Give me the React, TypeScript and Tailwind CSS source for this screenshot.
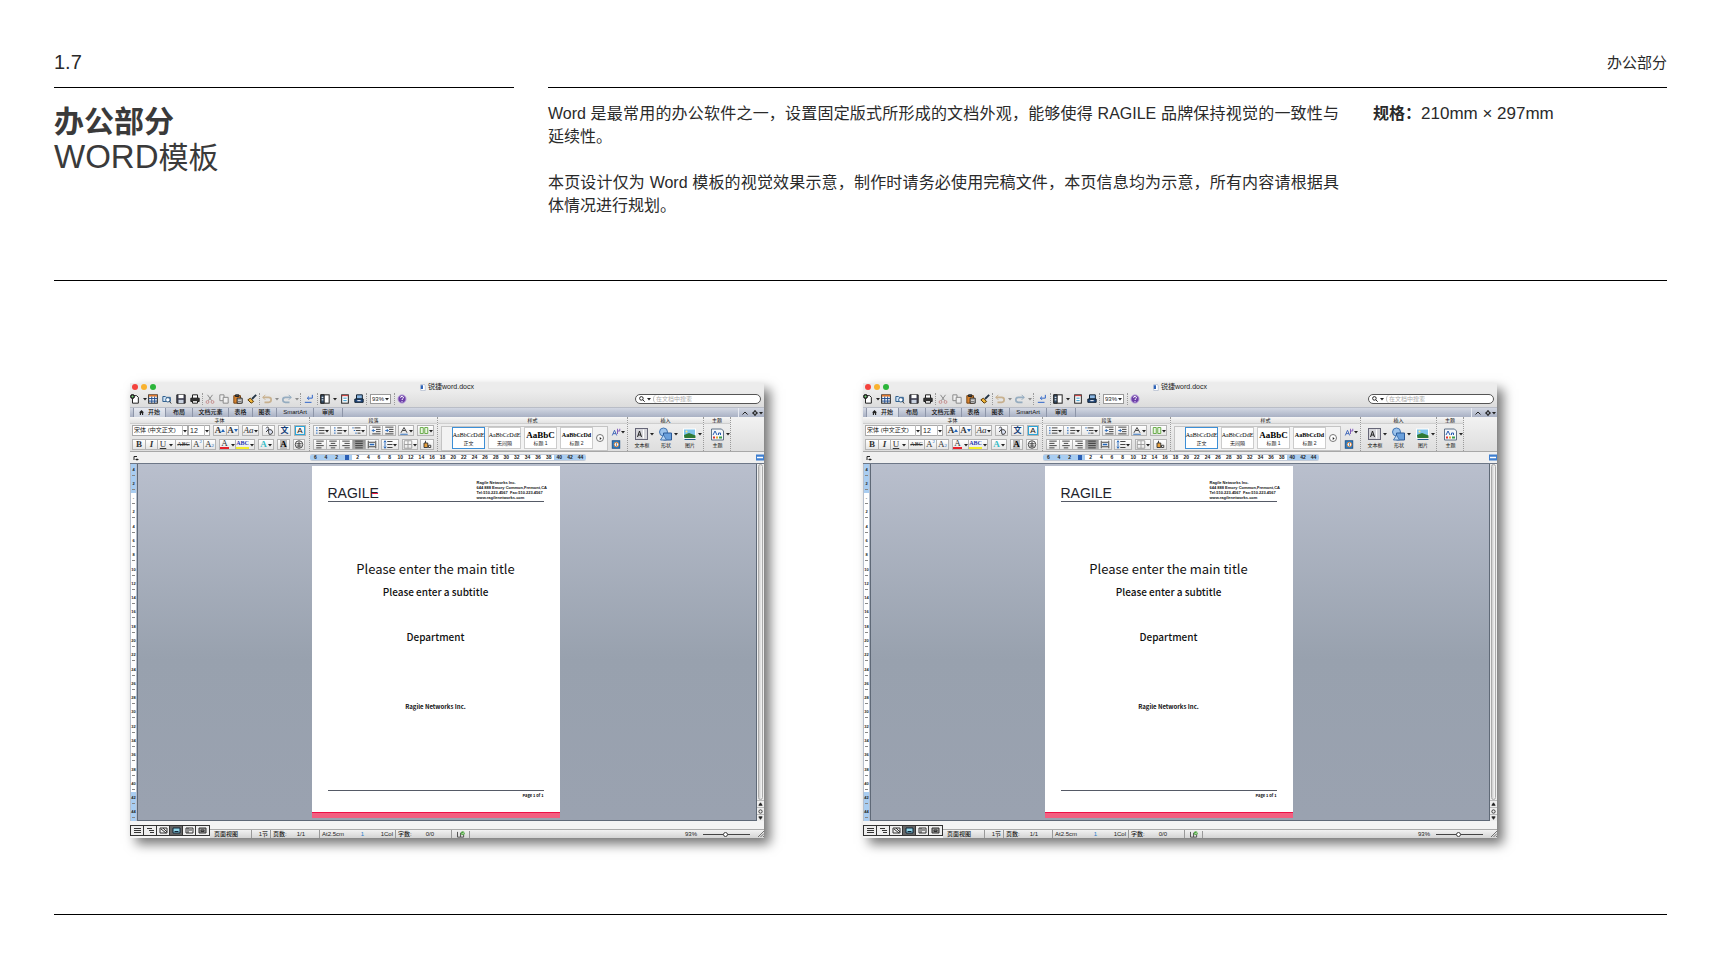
import React from "react";

type Kids = { children?: React.ReactNode };

const btn = "flex h-full items-center justify-center border border-[#b4b4b4] bg-gradient-to-b text-[#333]";

function Caret() {
  return (
    <svg viewBox="0 0 4 4" className="h-[4px] w-[4px] shrink-0">
      <path d="M0 1h4L2 3.4z" fill="#222" />
    </svg>
  );
}

function Tool({
  label,
  w,
  caret,
  active,
  children,
}: Kids & { label: string; w: string; caret?: boolean; active?: boolean }) {
  return (
    <button
      type="button"
      aria-label={label}
      className={`${btn} ${w} -mr-px shrink-0 ${active ? "from-[#939393] to-[#aaaaaa]" : "from-white to-[#e6e6e6]"}`}
    >
      {children}
      {caret && <Caret />}
    </button>
  );
}

function Cluster({ children, m }: Kids & { m?: string }) {
  return <div className={`flex h-[11px] shrink-0 pr-px ${m ?? ""}`}>{children}</div>;
}

function Glyph({ children, size = "h-[9px] w-[10px]" }: Kids & { size?: string }) {
  return (
    <svg viewBox="0 0 12 12" className={`${size} shrink-0`} fill="none" stroke="#333" strokeWidth="1.2">
      {children}
    </svg>
  );
}

function BarIcon({ label, w = "w-[14px]", caret, faded, children }: Kids & { label: string; w?: string; caret?: boolean; faded?: boolean }) {
  return (
    <button type="button" aria-label={label} className={`flex h-[14px] shrink-0 items-center justify-center ${w} ${faded ? "opacity-45" : ""}`}>
      <svg viewBox="0 0 12 12" className="h-[10px] w-[10px] shrink-0" fill="none" stroke="#222" strokeWidth="1.2">
        {children}
      </svg>
      {caret && <span className="ml-[3px] flex"><Caret /></span>}
    </button>
  );
}

function Dots() {
  return <span className="h-[12px] w-px shrink-0 border-l border-dotted border-[#9a9a9a]" />;
}

function TitleBar() {
  return (
    <div className="flex h-[8px] items-center bg-[#ececec] px-[2px]">
      <div className="flex w-[60px] gap-[3px]">
        <button type="button" aria-label="关闭" className="h-[6px] w-[6px] rounded-full bg-[#f4433d]" />
        <button type="button" aria-label="最小化" className="h-[6px] w-[6px] rounded-full bg-[#f9b22f]" />
        <button type="button" aria-label="缩放" className="h-[6px] w-[6px] rounded-full bg-[#2bb53a]" />
      </div>
      <div className="flex flex-1 items-center justify-center gap-[2px] pr-[60px]">
        <svg viewBox="0 0 8 8" className="h-[7px] w-[6px]">
          <path d="M1 0h5l1 2v6H1z" fill="#fff" stroke="#8899b5" strokeWidth=".6" />
          <path d="M1 1h3v5H1z" fill="#2e63b8" />
        </svg>
        <span className="text-[7px] leading-[8px] text-[#222]">锐捷word.docx</span>
      </div>
    </div>
  );
}

function Toolbar({ id }: { id: string }) {
  return (
    <div className="flex h-[16px] items-center bg-gradient-to-b from-[#ececec] to-[#dcdcdc] pr-[3px]">
      <BarIcon label="新建" w="w-[16px]" caret>
        <path d="M3 2h5l2 2v7H3z" fill="#fff" />
        <circle cx="3" cy="3" r="2.4" fill="#2a2a2a" />
        <path d="M3 1.6v2.8M1.6 3h2.8" stroke="#8f8" strokeWidth=".7" />
      </BarIcon>
      <BarIcon label="模板">
        <rect x=".8" y="1" width="10.4" height="10" fill="#fff" />
        <path d="M1 2h10" strokeWidth="2.2" stroke="#e0782d" />
        <path d="M1 5.5h10M1 8.5h10M4.5 3v8M8 3v8" stroke="#234e8c" />
      </BarIcon>
      <BarIcon label="打开">
        <path d="M1 3h3l1 1h5v5H1z" fill="#cfe4f7" stroke="#33618f" />
        <circle cx="7" cy="7" r="2.6" fill="#fff" stroke="#33618f" />
        <path d="M9 9l2 2.4" stroke="#333" />
      </BarIcon>
      <BarIcon label="保存">
        <path d="M1 1h10v10H1z" fill="#445" />
        <rect x="3" y="1" width="6" height="4" fill="#fff" stroke="none" />
        <rect x="3" y="7" width="6" height="4" fill="#c9d2df" stroke="none" />
      </BarIcon>
      <BarIcon label="打印">
        <path d="M3 5V1h6v4" fill="#fff" />
        <path d="M1 5h10v4H1z" fill="#333" />
        <path d="M3 8h6v3H3z" fill="#fff" />
      </BarIcon>
      <Dots />
      <BarIcon label="剪切" faded>
        <path d="M3 1l5 7M9 1L4 8" />
        <circle cx="3" cy="9.6" r="1.7" stroke="#a33" />
        <circle cx="9" cy="9.6" r="1.7" stroke="#a33" />
      </BarIcon>
      <BarIcon label="复制" faded>
        <path d="M1 1h5v7H1z" fill="#fff" />
        <path d="M5 4h6v7H5z" fill="#fff" />
      </BarIcon>
      <BarIcon label="粘贴">
        <path d="M1 2h8v9H1z" fill="#d8832f" stroke="#7a4615" />
        <path d="M3 1h4v2H3z" fill="#555" />
        <path d="M5 5h6v6H5z" fill="#fff" />
        <path d="M6 7h4M6 9h4" strokeWidth=".7" />
      </BarIcon>
      <BarIcon label="格式刷">
        <path d="M11 1L6 6" strokeWidth="2.2" stroke="#234" />
        <path d="M1 7l3-2 4 4-3 2z" fill="#f1b53a" stroke="#5a3c0c" />
      </BarIcon>
      <Dots />
      <BarIcon label="撤销" w="w-[20px]" caret faded>
        <path d="M1 4h7a3 3 0 010 6H3" stroke="#a8752a" strokeWidth="2" />
        <path d="M4 1L1 4l3 3" stroke="#a8752a" />
      </BarIcon>
      <BarIcon label="重做" w="w-[20px]" caret faded>
        <path d="M11 4H4a3 3 0 000 6h5" stroke="#3a6c97" strokeWidth="2" />
        <path d="M8 1l3 3-3 3" stroke="#3a6c97" />
      </BarIcon>
      <Dots />
      <BarIcon label="显示标记" w="w-[16px]">
        <path d="M10 1v4H4M6 3L4 5l2 2M1 10h8" stroke="#2f66c9" />
      </BarIcon>
      <Dots />
      <BarIcon label="侧边栏" w="w-[20px]" caret>
        <rect x="1" y="1" width="10" height="10" fill="#fff" />
        <path d="M1 1h4v10H1z" fill="#39536f" />
        <path d="M2 4h2M2 7h2" stroke="#fff" />
      </BarIcon>
      <BarIcon label="工具箱">
        <rect x="2" y="1" width="8" height="10" fill="#fff" />
        <path d="M2 2h8" stroke="#c33" />
        <path d="M4 5h4M4 8h4" stroke="#39c" />
      </BarIcon>
      <BarIcon label="媒体">
        <path d="M3 1h7v5H3z" fill="#8bb7e4" stroke="#123" />
        <path d="M1 6h10v4H1z" fill="#234a82" stroke="#123" />
        <path d="M4 8h4" stroke="#fff" />
      </BarIcon>
      <Dots />
      <div className="relative mx-[3px] flex items-center">
        <select aria-label="显示比例" id={`${id}-zoom`} className="h-[10px] w-[21px] appearance-none border border-[#999] bg-white px-[1px] text-[6px] leading-[8px] text-[#222]">
          <option>93%</option>
        </select>
        <span className="pointer-events-none absolute right-[2px] flex"><Caret /></span>
      </div>
      <Dots />
      <BarIcon label="帮助" w="w-[14px]">
        <circle cx="6" cy="6" r="5" fill="#6d3fa8" stroke="#c9b7e2" />
        <path d="M4.4 4.6a1.6 1.6 0 113 .6c-.6.6-1.4.8-1.4 2M6 8.4v1" stroke="#fff" />
      </BarIcon>
      <label className="ml-auto flex h-[10px] w-[126px] items-center gap-[2px] rounded-full border border-[#555] bg-white px-[3px]">
        <svg viewBox="0 0 8 8" className="h-[6px] w-[6px] shrink-0" fill="none" stroke="#222" strokeWidth="1.3">
          <circle cx="3.2" cy="3.2" r="2.4" />
          <path d="M5 5l2.6 2.6" />
        </svg>
        <Caret />
        <input aria-label="搜索" placeholder="在文档中搜索" className="min-w-0 flex-1 rounded-l-full border-l border-[#bbb] bg-transparent pl-[2px] text-[6px] leading-[8px] outline-none placeholder:text-[#aaa]" />
      </label>
    </div>
  );
}

const tabs: [string, string][] = [
  ["布局", "w-[27px]"],
  ["文档元素", "w-[36px]"],
  ["表格", "w-[24px]"],
  ["图表", "w-[24px]"],
  ["SmartArt", "w-[37px]"],
  ["审阅", "w-[29px]"],
];

function Tabs() {
  return (
    <div className="flex h-[10px] items-stretch border-t border-[#b9bdc7] bg-gradient-to-b from-[#d3d8e3] to-[#a9b1c4] pl-[3px] text-[6px] leading-[8px] font-medium text-[#111]">
      <button type="button" className="flex w-[33px] items-center justify-center gap-[4px] border-x border-[#8d95a8] bg-gradient-to-b from-[#e6e9f0] to-[#cdd3df] pb-px">
        <svg viewBox="0 0 6 6" className="h-[5px] w-[5px]">
          <path d="M3 0l3 3H5v3H3.6V4H2.4v2H1V3H0z" fill="#222" />
        </svg>
        开始
      </button>
      {tabs.map(([name, w]) => (
        <button key={name} type="button" className={`${w} border-r border-[#8d95a8] pb-px`}>
          {name}
        </button>
      ))}
      <button type="button" aria-label="折叠功能区" className="ml-auto flex w-[12px] items-center justify-center border-l border-[#e8ebf2]">
        <svg viewBox="0 0 6 4" className="h-[4px] w-[6px]" fill="none" stroke="#222"><path d="M.5 3.5L3 1l2.5 2.5" /></svg>
      </button>
      <button type="button" aria-label="设置" className="flex w-[14px] items-center justify-center gap-px">
        <svg viewBox="0 0 8 8" className="h-[6px] w-[6px]" fill="none" stroke="#222" strokeWidth="1.6">
          <circle cx="4" cy="4" r="2" />
          <path d="M4 0v2M4 6v2M0 4h2M6 4h2" />
        </svg>
        <Caret />
      </button>
    </div>
  );
}

function Group({ title, w, children }: Kids & { title: string; w: string }) {
  return (
    <div className={`${w} shrink-0 border-r border-dotted border-[#9a9a9a]`}>
      <div className="h-[7px] border-b border-[#cfcfcf] bg-gradient-to-b from-[#f7f7f7] to-[#e2e2e2] text-center text-[5px] leading-[7px] text-[#111]">
        {title}
      </div>
      {children}
    </div>
  );
}

const serif = "font-['Liberation_Serif','Noto_Sans_CJK_SC',serif]";

function FontGroup({ id }: { id: string }) {
  return (
    <Group title="字体" w="w-[180px]">
      <div className="flex flex-col gap-[3px] pt-px pl-[2px]">
        <div className="flex h-[11px]">
          <div className="relative flex items-center">
            <select id={`${id}-font`} aria-label="字体名称" className="h-[11px] w-[56px] appearance-none border border-[#aaa] bg-white px-px text-[6px] leading-[9px] text-[#222]">
              <option>宋体 (中文正文)</option>
            </select>
            <span className="pointer-events-none absolute right-0 flex h-[11px] w-[6px] items-center border-l border-[#bbb]"><Caret /></span>
          </div>
          <div className="relative flex items-center">
            <select id={`${id}-size`} aria-label="字号" className="h-[11px] w-[22px] appearance-none border border-[#aaa] bg-white px-px text-[7px] leading-[9px] text-[#222]">
              <option>12</option>
            </select>
            <span className="pointer-events-none absolute right-0 flex h-[11px] w-[6px] items-center border-l border-[#bbb]"><Caret /></span>
          </div>
          <Cluster m="ml-[3px]">
            <Tool label="增大字号" w="w-[14px]"><span className={`${serif} text-[9px] leading-[9px] font-bold`}>A</span><svg viewBox="0 0 4 4" className="h-[4px] w-[4px]"><path d="M0 3h4L2 0z" fill="#26b" /></svg></Tool>
            <Tool label="减小字号" w="w-[13px]"><span className={`${serif} text-[9px] leading-[9px] font-bold`}>A</span><svg viewBox="0 0 4 4" className="h-[4px] w-[4px]"><path d="M0 0h4L2 3z" fill="#26b" /></svg></Tool>
          </Cluster>
          <Cluster m="ml-[3px]">
            <Tool label="更改大小写" w="w-[17px]" caret><span className={`${serif} text-[9px] leading-[9px] italic`}>Aa</span></Tool>
          </Cluster>
          <Cluster m="ml-[3px]">
            <Tool label="清除格式" w="w-[13px]"><Glyph><path d="M2 3c2-3 5-1 3 2L2 8M5 5h4l2 3-2 3H6z" fill="#dde3f5" /></Glyph></Tool>
          </Cluster>
          <Cluster m="ml-[3px]">
            <Tool label="拼音指南" w="w-[13px]"><span className="text-[8px] leading-[8px] font-bold text-[#123c78]">文</span></Tool>
          </Cluster>
          <Cluster m="ml-[3px]">
            <Tool label="字符边框" w="w-[12px]"><span className="border border-[#2ba6d9] px-px text-[8px] leading-[7px] text-[#111]">A</span></Tool>
          </Cluster>
        </div>
        <div className={`flex h-[11px] text-[9px] leading-[9px] ${serif}`}>
          <Cluster>
            <Tool label="粗体" w="w-[14px]"><b>B</b></Tool>
            <Tool label="斜体" w="w-[13px]"><i className="font-bold">I</i></Tool>
            <Tool label="下划线" w="w-[19px]" caret><span className="mr-[3px] underline">U</span></Tool>
            <Tool label="删除线" w="w-[17px]"><s className="text-[6px]">ABC</s></Tool>
            <Tool label="上标" w="w-[13px]">A<sup className="text-[5px] text-[#26b]">2</sup></Tool>
            <Tool label="下标" w="w-[13px]">A<sub className="text-[5px] text-[#26b]">2</sub></Tool>
          </Cluster>
          <Cluster m="ml-[3px]">
            <Tool label="字体颜色" w="w-[17px]" caret><span className="mr-[2px] border-b-2 border-[#e8202a] px-px leading-[7px]">A</span></Tool>
            <Tool label="突出显示" w="w-[20px]" caret><b className="mr-px border-b-2 border-[#f3ee2a] text-[6px] leading-[7px] text-[#2436b0]">ABC</b></Tool>
          </Cluster>
          <Cluster m="ml-[3px]">
            <Tool label="文本效果" w="w-[16px]" caret><span className="mr-px font-bold text-[#35bcc6]">A</span></Tool>
          </Cluster>
          <Cluster m="ml-[3px]">
            <Tool label="字符底纹" w="w-[13px]"><b className="bg-[#bbb] text-[#000]">A</b></Tool>
          </Cluster>
          <Cluster m="ml-[3px]">
            <Tool label="带圈字符" w="w-[12px]"><Glyph><circle cx="6" cy="6" r="5" /><path d="M2.5 5h7M6 2v8M3 8h6" /></Glyph></Tool>
          </Cluster>
        </div>
      </div>
    </Group>
  );
}

function ParagraphGroup() {
  const dots = <path d="M1 2.5h1.6M1 6h1.6M1 9.5h1.6" stroke="#26b" strokeWidth="1.8" />;
  return (
    <Group title="段落" w="w-[128px]">
      <div className="flex flex-col gap-[3px] pt-px pl-[3px]">
        <div className="flex h-[11px]">
          <Cluster>
            <Tool label="项目符号" w="w-[18px]" caret><Glyph>{dots}<path d="M4.5 2.5H12M4.5 6H12M4.5 9.5H12" /></Glyph></Tool>
            <Tool label="编号" w="w-[19px]" caret><Glyph>{dots}<path d="M5 2.5h6M5 6h7M5 9.5h6" /></Glyph></Tool>
            <Tool label="多级列表" w="w-[19px]" caret><Glyph><path d="M1 2.5h2M3 6h2M5 9.5h2" stroke="#26b" /><path d="M4 2.5h8M6 6h6M8 9.5h4" /></Glyph></Tool>
          </Cluster>
          <Cluster m="ml-[2px]">
            <Tool label="减少缩进" w="w-[14px]"><Glyph><path d="M1 1.5h11M6 4.5h6M6 7.5h6M1 10.5h11" /><path d="M5 6H1M3 4L1 6l2 2" stroke="#26b" /></Glyph></Tool>
            <Tool label="增加缩进" w="w-[14px]"><Glyph><path d="M1 1.5h11M6 4.5h6M6 7.5h6M1 10.5h11" /><path d="M1 6h4M3 4l2 2-2 2" stroke="#26b" /></Glyph></Tool>
          </Cluster>
          <Cluster m="ml-[2px]">
            <Tool label="中文版式" w="w-[16px]" caret><Glyph><path d="M2 9l4-7 4 7M4 6h4" /><path d="M1 11h10" stroke="#26b" /></Glyph></Tool>
          </Cluster>
          <Cluster m="ml-[3px]">
            <Tool label="分栏" w="w-[17px]" caret><Glyph><path d="M1 2h4v8H1zM7 2h4v8H7z" stroke="#5da53c" fill="#eaf6e2" /></Glyph></Tool>
          </Cluster>
        </div>
        <div className="flex h-[11px]">
          <Cluster>
            <Tool label="左对齐" w="w-[14px]"><Glyph><path d="M1 1.5h10M1 4.5h7M1 7.5h10M1 10.5h7" /></Glyph></Tool>
            <Tool label="居中" w="w-[14px]"><Glyph><path d="M1 1.5h10M3 4.5h6M1 7.5h10M3 10.5h6" /></Glyph></Tool>
            <Tool label="右对齐" w="w-[14px]"><Glyph><path d="M1 1.5h10M4 4.5h7M1 7.5h10M4 10.5h7" /></Glyph></Tool>
            <Tool label="两端对齐" w="w-[14px]" active><Glyph><path d="M1 1.5h10M1 4.5h10M1 7.5h10M1 10.5h10" /></Glyph></Tool>
            <Tool label="分散对齐" w="w-[14px]"><Glyph><path d="M1 1v10M11 1v10M2 3h8M2 9h8" /><path d="M3 6h6" stroke="#26b" strokeWidth="2" /></Glyph></Tool>
          </Cluster>
          <Cluster m="ml-[2px]">
            <Tool label="行距" w="w-[18px]" caret><Glyph><path d="M5 2h7M5 6h7M5 10h7" /><path d="M2 1v10M.5 3L2 1l1.500 2M.5 9L2 11l1.500-2" stroke="#26b" /></Glyph></Tool>
          </Cluster>
          <Cluster m="ml-[3px]">
            <Tool label="边框" w="w-[16px]" caret><Glyph><path d="M1 1h10v10H1zM6 1v10M1 6h10" stroke="#999" /></Glyph></Tool>
          </Cluster>
          <Cluster m="ml-[2px]">
            <Tool label="底纹" w="w-[14px]"><Glyph><path d="M2 4h5v6H2z" fill="#e9a13d" /><path d="M4 4V1M8 7h3v3H8z" /></Glyph></Tool>
          </Cluster>
        </div>
      </div>
    </Group>
  );
}

const styleCards: [string, string, string][] = [
  ["AaBbCcDdE", "正文", "text-[6px]"],
  ["AaBbCcDdE", "无间隔", "text-[6px]"],
  ["AaBbC", "标题 1", "text-[9px] font-bold"],
  ["AaBbCcDd", "标题 2", "text-[6px] font-bold"],
];

function StyleGroup() {
  return (
    <Group title="样式" w="w-[190px]">
      <div className="flex h-[28px] items-center pl-[3px]">
        <div className="flex h-[25px] items-center gap-[3px] border border-[#c4c4c4] bg-[#f3f3f3] pr-[3px] pl-[10px]">
          {styleCards.map(([sample, name, cls], i) => (
            <button
              key={name}
              type="button"
              className={`flex h-[22px] w-[33px] flex-col items-center justify-between border bg-white pt-[2px] pb-px ${i === 0 ? "border-[#3d8fd6]" : "border-[#ccc]"}`}
            >
              <span className={`${serif} ${cls} leading-[10px] whitespace-nowrap text-black`}>{sample}</span>
              <span className="text-[5px] leading-[7px] text-[#222]">{name}</span>
            </button>
          ))}
          <button type="button" aria-label="更多样式" className="flex h-[8px] w-[8px] items-center justify-center rounded-full border border-[#777] bg-white">
            <svg viewBox="0 0 4 4" className="h-[3px] w-[3px]"><path d="M1 0l2.500 2L1 4z" fill="#222" /></svg>
          </button>
        </div>
        <div className="ml-[3px] flex flex-col gap-[3px]">
          <button type="button" aria-label="更改样式" className="flex items-center">
            <Glyph><path d="M1 10l3-7 3 7M2 7.500h4" stroke="#3a62b8" /><path d="M8 1v7M8 4h3V1" stroke="#7a4fb5" /></Glyph>
            <Caret />
          </button>
          <button type="button" aria-label="样式管理">
            <Glyph><rect x="1" y="1" width="10" height="10" fill="#2c7fc4" stroke="#1d4f86" /><circle cx="6.500" cy="6" r="3" fill="#fff" stroke="#e07a2a" /><path d="M6.500 4v4" stroke="#2c7fc4" /></Glyph>
          </button>
        </div>
      </div>
    </Group>
  );
}

function BigTool({ name, w, children }: Kids & { name: string; w: string }) {
  return (
    <button type="button" className={`flex ${w} shrink-0 flex-col items-center`}>
      <span className="flex items-center gap-px pl-[4px]">
        <svg viewBox="0 0 14 14" className="h-[14px] w-[15px]" fill="none" stroke="#333">{children}</svg>
        <Caret />
      </span>
      <span className="text-[5px] leading-[9px] text-[#111]">{name}</span>
    </button>
  );
}

function Ribbon({ id }: { id: string }) {
  return (
    <div className="flex h-[35px] border-b border-[#a8a8a8] bg-gradient-to-b from-[#f2f2f2] to-[#dedede]">
      <FontGroup id={id} />
      <ParagraphGroup />
      <StyleGroup />
      <Group title="插入" w="w-[76px]">
        <div className="flex pt-[3px] pl-[2px]">
          <BigTool name="文本框" w="w-[24px]">
            <rect x="1" y="1.500" width="12" height="11" fill="#d5d5da" stroke="#667" />
            <path d="M3 10l2-6 2 6M3.600 8h3" stroke="#222" />
            <path d="M9 2.500v9" stroke="#fff" />
          </BigTool>
          <BigTool name="形状" w="w-[24px]">
            <circle cx="5" cy="5" r="4" fill="#9cc3ec" stroke="#4577b3" />
            <path d="M5 6h8v7H5z" fill="#6aa0dc" stroke="#2b5a98" />
            <path d="M2 13l3-5 3 5z" fill="#b9d5f2" stroke="#4577b3" />
          </BigTool>
          <BigTool name="图片" w="w-[24px]">
            <rect x="1" y="2" width="12" height="9" fill="#7fc4ec" stroke="#fff" />
            <path d="M1.500 8l5-2 6.500 2.500V11h-11z" fill="#2f7a35" stroke="none" />
            <path d="M2 12.500h11" stroke="#235a90" />
            <circle cx="4" cy="4.500" r="1" fill="#ffe98a" stroke="none" />
          </BigTool>
        </div>
      </Group>
      <Group title="主题" w="w-[27px]">
        <div className="pt-[3px] pl-px">
          <BigTool name="主题" w="w-[25px]">
            <path d="M1 2h10l2 2v9H1z" fill="#f4f7fb" stroke="#5f7186" />
            <path d="M2.500 8l2-4 2 4M8 8V6h2v2" stroke="#2a5cb0" />
            <path d="M2.500 10.500h2" stroke="#d33" strokeWidth="2" />
            <path d="M5.500 10.500h2" stroke="#e9a52d" strokeWidth="2" />
            <path d="M8.500 10.500h3" stroke="#3c9c4c" strokeWidth="2" />
          </BigTool>
        </div>
      </Group>
    </div>
  );
}

const hMarks = [6, 4, 2, 0, ...Array.from({ length: 22 }, (_, i) => (i + 1) * 2)];
const vMarks = [4, 2, 0, ...Array.from({ length: 22 }, (_, i) => (i + 1) * 2)];

function HorizontalRuler() {
  return (
    <div className="flex h-[12px] items-center border-b border-[#6d7787] bg-[#f0f0f0] pl-[3px]">
      <svg viewBox="0 0 6 6" className="h-[6px] w-[6px]" fill="none" stroke="#222"><path d="M1 5V1.500h3M4 3.500v2M2.500 4.500h3" /></svg>
      <div className="ml-[171px] flex h-[7px] w-[276px] overflow-hidden rounded-[2px] border-y border-[#c3cad6] bg-white text-[5px] leading-[5px] font-bold text-[#222]">
        {hMarks.map((n, i) => (
          <span key={i} className={`flex-1 text-center ${i < 4 || i > 22 ? "bg-[#a9cdf1]" : ""}`}>
            {i === 3 ? <span className="mx-auto block h-full w-[4px] bg-[#2b5fb5]" /> : n}
          </span>
        ))}
      </div>
      <svg viewBox="0 0 8 6" className="ml-auto h-[7px] w-[8px]"><path d="M0 0h8v6H0z" fill="#3f7fd0" /><path d="M1 3h6" stroke="#fff" strokeWidth="1.500" /></svg>
    </div>
  );
}

function VerticalRuler() {
  return (
    <div className="flex w-[7px] shrink-0 flex-col border-x border-[#b7bfcc] bg-white text-[4px] font-bold text-[#222]">
      {vMarks.map((n, i) => (
        <span key={i} className={`flex flex-1 flex-col items-center justify-center ${i < 2 || i > 22 ? "bg-[#a9cdf1]" : ""}`}>
          <span className="leading-[5px]">{i === 2 ? "-" : n}</span>
          <span className="mt-[3px] h-px w-[3px] bg-[#888]" />
        </span>
      ))}
    </div>
  );
}

function Page({ accent }: { accent: boolean }) {
  return (
    <article className="flex h-[352px] w-[248px] shrink-0 flex-col bg-white font-['Noto_Sans_CJK_SC','Noto_Sans',sans-serif] text-[#111]">
      <header className="mx-[16px] mt-[14px] flex h-[22px] items-end justify-between border-b border-[#555a66]">
        <span className="relative mb-[2px] font-['Liberation_Sans',sans-serif] text-[14px] leading-[11px] text-[#22232b]">
          RAGILE
          {accent && <span className="absolute top-[5px] right-px h-px w-[6px] bg-[#ee1c45]" />}
        </span>
        <address className="mb-px w-[67px] font-['Liberation_Sans',sans-serif] text-[4px] leading-[5px] font-bold whitespace-nowrap not-italic">
          Ragile Networks Inc.
          <br />
          644 888 Emory Common,Fremont,CA
          <br />
          Tel:510.223.4567&nbsp; Fax:510.223.4567
          <br />
          www.ragilenetworks.com
        </address>
      </header>
      <h2 className="mt-[59px] text-center text-[13px] leading-[16px]">Please enter the main title</h2>
      <p className="mt-[8px] text-center text-[10px] leading-[14px] font-medium">Please enter a subtitle</p>
      <p className="mt-[31px] text-center text-[10px] leading-[14px] font-medium">Department</p>
      <p className="mt-[58px] text-center text-[6px] leading-[10px] font-bold">Ragile Networks Inc.</p>
      <footer className="mt-auto">
        <div className="mx-[16px] h-[22px] border-t border-[#555a66] pt-[2px] text-right text-[4px] leading-[5px] font-bold">Page 1 of 1</div>
        <div className="h-[6px] border-t border-[#ee0f45] bg-[#f25f80]" />
      </footer>
    </article>
  );
}

const views = ["草稿视图", "大纲视图", "出版版式视图", "页面视图", "笔记本版式视图", "全屏视图"];

function StatusBar({ id }: { id: string }) {
  return (
    <div className="flex h-[17px] items-end bg-[#f4f4f4]">
      <div className="mb-[2px] flex h-[11px] shrink-0 border border-[#333] bg-[#eee]">
        {views.map((v, i) => (
          <button key={v} type="button" aria-label={v} className={`flex w-[13px] items-center justify-center border-r border-[#333] last:border-r-0 ${i === 3 ? "bg-[#666]" : ""}`}>
            <svg viewBox="0 0 9 7" className="h-[7px] w-[9px]" fill="none" stroke="#333">
              {i === 0 && <path d="M1 1.500h7M1 3.500h7M1 5.500h7" />}
              {i === 1 && <path d="M1 1.500h5M3 3.500h5M4 5.500h4" />}
              {i === 2 && <path d="M1 1h7v5H1zM2 2l5 4M4 1l4 4" />}
              {i === 3 && <path d="M1 1h7v5H1zM2.500 4.500h4" fill="#8fd4e8" stroke="#123" />}
              {i === 4 && <path d="M1 1h7v5H1zM3 1v5M4 3h3" />}
              {i === 5 && <path d="M1 1h7v5H1zM3 3h3v1.500H3z" fill="#999" />}
            </svg>
          </button>
        ))}
      </div>
      <div className="flex h-[9px] flex-1 items-center border-t border-[#aaa] bg-gradient-to-b from-[#f2f2f2] to-[#d4d4d4] text-[6px] leading-[8px] font-medium whitespace-nowrap text-[#222]">
        <span className="w-[42px] border-r border-[#999] pl-[4px]">页面视图</span>
        <span className="w-[19px] border-r border-[#999] pr-[2px] text-right">1节</span>
        <span className="flex w-[49px] justify-between border-r border-[#999] pr-[14px] pl-[2px]">
          <span>页数:</span>
          <span>1/1</span>
        </span>
        <span className="flex w-[76px] justify-between border-r border-[#999] px-[2px]">
          <span>At2.5cm</span>
          <span className="text-[#2a7fc9]">1</span>
          <span>1Col</span>
        </span>
        <span className="flex w-[56px] justify-between border-r border-[#999] pr-[17px] pl-[2px]">
          <span>字数:</span>
          <span>0/0</span>
        </span>
        <span className="flex w-[18px] justify-center border-r border-[#999]">
          <svg viewBox="0 0 10 8" className="h-[7px] w-[10px]" fill="none">
            <path d="M1 1v6h3.500V2M4.500 7H8V4" stroke="#444" />
            <circle cx="7" cy="2.500" r="2.200" fill="#4da53f" />
            <path d="M6 2.500l1 1 1.500-2" stroke="#fff" strokeWidth=".7" />
          </svg>
        </span>
        <label htmlFor={`${id}-slider`} className="ml-auto">93%</label>
        <input
          id={`${id}-slider`}
          type="range"
          defaultValue={47}
          className="mx-[6px] h-[5px] w-[47px] appearance-none bg-[linear-gradient(#444,#444)] bg-[length:100%_1px] bg-center bg-no-repeat [&::-webkit-slider-thumb]:h-[5px] [&::-webkit-slider-thumb]:w-[5px] [&::-webkit-slider-thumb]:appearance-none [&::-webkit-slider-thumb]:rounded-full [&::-webkit-slider-thumb]:border [&::-webkit-slider-thumb]:border-[#444] [&::-webkit-slider-thumb]:bg-white"
        />
        <svg viewBox="0 0 6 6" className="ml-[2px] h-[6px] w-[6px]" stroke="#555" strokeWidth=".8"><path d="M0 6l6-6M2.500 6L6 2.500M5 6l1-1" /></svg>
      </div>
    </div>
  );
}

function WordWindow({ id, accent }: { id: string; accent: boolean }) {
  return (
    <section className="min-w-0 bg-[#ececec] shadow-[6px_6px_11px_rgba(0,0,0,0.55)]">
      <TitleBar />
      <Toolbar id={id} />
      <Tabs />
      <Ribbon id={id} />
      <HorizontalRuler />
      <div className="flex h-[357px]">
        <VerticalRuler />
        <div className="flex flex-1 justify-center border-x border-b border-[#5f6977] bg-gradient-to-b from-[#b9bfcd] via-[#98a1ae] via-55% to-[#9aa2b0] pt-[2px] pr-[23px]">
          <Page accent={accent} />
        </div>
        <div className="flex w-[7px] shrink-0 flex-col justify-end bg-[#eee]">
          <div className="mx-px flex-1 rounded-full border border-[#aaa] bg-gradient-to-r from-[#ccc] to-[#f7f7f7]" />
          {["M1 4l2-3 2 3z", "M3 1a2 2 0 100 4 2 2 0 000-4z", "M1 1l2 3 2-3z"].map((d, i) => (
            <button key={d} type="button" aria-label={["上一页", "选择浏览对象", "下一页"][i]} className="flex h-[7px] items-center justify-center border-t border-[#bbb]">
              <svg viewBox="0 0 6 6" className="h-[5px] w-[5px]" fill={i === 1 ? "none" : "#222"} stroke="#222"><path d={d} /></svg>
            </button>
          ))}
        </div>
      </div>
      <StatusBar id={id} />
    </section>
  );
}

export default function App() {
  return (
    <div className="min-h-screen bg-white pt-12 pr-[53px] pb-[53px] pl-[54px] font-['Liberation_Sans','Noto_Sans_CJK_SC',sans-serif] text-[#2a2a2a]">
      <header>
        <div className="grid grid-cols-[460fr_791fr_294fr] gap-x-[34px]">
          <div className="h-10 border-b border-black text-[20px] leading-[29px]">1.7</div>
          <div className="col-span-2 h-10 border-b border-black text-right text-[15px] leading-[30px]">办公部分</div>
        </div>
        <div className="grid min-h-[193px] grid-cols-[460fr_791fr_294fr] gap-x-[34px] border-b border-black">
          <h1 className="pt-4 text-[30px] leading-[35px] text-[#3a3a3a]">
            <strong className="block">办公部分</strong>
            <span className="block"><span className="text-[33px]">WORD</span>模板</span>
          </h1>
          <div className="space-y-[23px] pt-[14px] text-justify text-[16px] leading-[23px]">
            <p>Word 是最常用的办公软件之一，设置固定版式所形成的文档外观，能够使得 RAGILE 品牌保持视觉的一致性与延续性。</p>
            <p>本页设计仅为 Word 模板的视觉效果示意，制作时请务必使用完稿文件，本页信息均为示意，所有内容请根据具体情况进行规划。</p>
          </div>
          <p className="pt-[14px] text-[16px] leading-[23px] whitespace-nowrap">
            <strong>规格：</strong><span className="text-[17px]">210mm × 297mm</span>
          </p>
        </div>
      </header>
      <main className="grid grid-cols-2 gap-[99px] border-b border-black pt-[102px] pr-[170px] pb-[76px] pl-[76px]">
        <WordWindow id="doc-a" accent />
        <WordWindow id="doc-b" accent={false} />
      </main>
    </div>
  );
}
